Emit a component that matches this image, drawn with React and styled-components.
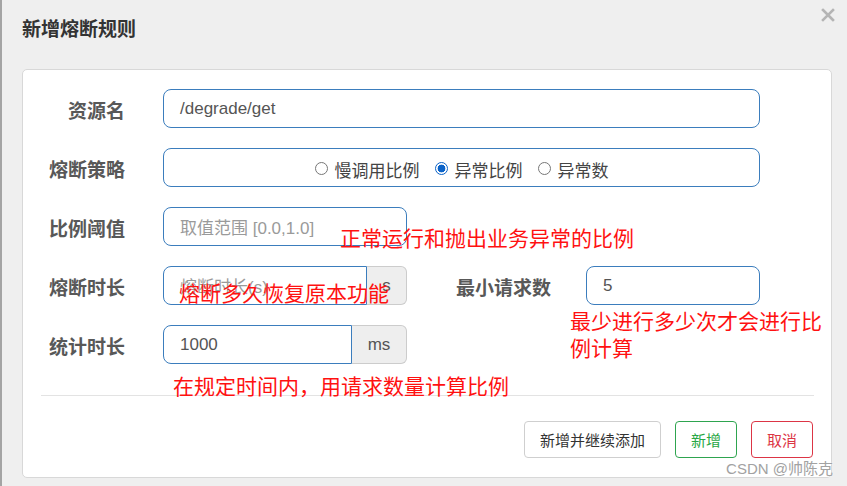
import React from "react";
import styled, { createGlobalStyle } from "styled-components";

const GlobalStyle = createGlobalStyle`
  html, body { margin: 0; padding: 0; background: #efefef; }
  body { font-family: "Liberation Sans", "Noto Sans CJK SC", sans-serif; }
  * { box-sizing: border-box; }
`;

const Page = styled.div`
  position: relative;
  width: 847px;
  height: 486px;
  background: #efefef;
  border-left: 2px solid #a4a4a4;
  padding: 0 15px 0 20px;
  overflow: hidden;
`;

const Header = styled.div`
  height: 69px;
  display: flex;
  justify-content: space-between;
  align-items: flex-start;
`;

const Title = styled.h4`
  margin: 15px 0 0;
  font-family: "Noto Sans CJK SC", sans-serif;
  font-size: 19px;
  line-height: 26px;
  font-weight: 700;
  color: #333;
`;

const Close = styled.button`
  margin: 8px -3px 0 0;
  padding: 0;
  border: 0;
  background: none;
  width: 14px;
  height: 14px;
  display: flex;
`;

const Card = styled.div`
  position: relative;
  width: 810px;
  height: 409px;
  background: #fff;
  border: 1px solid #d8d8d8;
  border-radius: 5px;
  padding-top: 19px;
`;

const Form = styled.div`
  display: flex;
  flex-direction: column;
  gap: 20px;
`;

const Row = styled.div`
  display: flex;
  align-items: center;
  height: 39px;
`;

const Label = styled.label`
  width: ${(p) => p.$w}px;
  margin-right: ${(p) => p.$gap}px;
  text-align: right;
  font-family: "Noto Sans CJK SC", sans-serif;
  font-size: 19px;
  font-weight: 700;
  color: #585858;
  line-height: 24px;
  padding-top: 2px;
`;

const Input = styled.div`
  width: ${(p) => p.$w}px;
  height: 39px;
  border: 1px solid #3b7dbd;
  border-radius: ${(p) => (p.$grouped ? "8px 0 0 8px" : "8px")};
  padding-left: 16px;
  display: flex;
  align-items: center;
  font-family: "Liberation Sans", "Noto Sans CJK SC", sans-serif;
  font-size: 17px;
  color: ${(p) => (p.$placeholder ? "#9a9a9a" : "#555")};
`;

const Group = styled.div`
  display: flex;
`;

const Addon = styled.div`
  width: ${(p) => p.$w}px;
  height: 39px;
  background: #eee;
  border: 1px solid #ccc;
  border-left: 0;
  border-radius: 0 6px 6px 0;
  display: flex;
  align-items: center;
  justify-content: center;
  font-size: 17px;
  color: #555;
`;

const RadioBox = styled.div`
  width: 597px;
  height: 39px;
  border: 1px solid #3b7dbd;
  border-radius: 8px;
  display: flex;
  align-items: center;
  justify-content: center;
  gap: 15px;
  padding-top: 3px;
`;

const Option = styled.span`
  display: flex;
  align-items: center;
  gap: 7px;
  font-family: "Noto Sans CJK SC", sans-serif;
  font-size: 17px;
  color: #444;
`;

const Dot = styled.span`
  width: 13px;
  height: 13px;
  border-radius: 50%;
  border: ${(p) => (p.$on ? "1.5px solid #0b63c8" : "1px solid #777")};
  background: ${(p) => (p.$on ? "radial-gradient(circle, #0b63c8 0 3.6px, #fff 4.2px)" : "#fff")};
  margin-top: -2px;
`;

const Divider = styled.div`
  height: 1px;
  background: #e3e3e3;
  margin: 31px 17px 0 18px;
`;

const Footer = styled.div`
  display: flex;
  justify-content: flex-end;
  gap: 14px;
  padding: 25px 18px 0 0;
`;

const Button = styled.button`
  height: 37px;
  padding: 0 ${(p) => p.$px || 15}px;
  background: #fff;
  border: 1px solid ${(p) => p.$border};
  border-radius: 4px;
  color: ${(p) => p.$color};
  font-family: "Noto Sans CJK SC", sans-serif;
  font-size: 15px;
`;

const Note = styled.div`
  position: absolute;
  left: ${(p) => p.$x}px;
  top: ${(p) => p.$y}px;
  width: ${(p) => (p.$w ? `${p.$w}px` : "auto")};
  white-space: ${(p) => (p.$w ? "normal" : "nowrap")};
  font-family: "Noto Sans CJK SC", sans-serif;
  font-size: 21px;
  line-height: ${(p) => p.$lh || 24}px;
  color: #ff1111;
`;

const Watermark = styled.div`
  position: absolute;
  right: 14px;
  top: 459px;
  font-family: "Liberation Sans", "Noto Sans CJK SC", sans-serif;
  font-size: 15px;
  line-height: 20px;
  color: #a2a2a2;
  text-shadow: 0 0 2px #fff;
`;

export default function App() {
  return (
    <>
      <GlobalStyle />
      <Page>
        <Header>
          <Title>新增熔断规则</Title>
          <Close aria-label="close">
            <svg width="14" height="14" viewBox="0 0 14 14">
              <path d="M2 2 L12 12 M12 2 L2 12" stroke="#b4b4b4" strokeWidth="2.6" strokeLinecap="square" />
            </svg>
          </Close>
        </Header>
        <Card>
          <Form>
            <Row>
              <Label $w={102} $gap={38}>资源名</Label>
              <Input $w={597}>/degrade/get</Input>
            </Row>
            <Row>
              <Label $w={102} $gap={38}>熔断策略</Label>
              <RadioBox>
                <Option><Dot />慢调用比例</Option>
                <Option><Dot $on />异常比例</Option>
                <Option><Dot />异常数</Option>
              </RadioBox>
            </Row>
            <Row>
              <Label $w={102} $gap={38}>比例阈值</Label>
              <Input $w={244} $placeholder>取值范围 [0.0,1.0]</Input>
            </Row>
            <Row>
              <Label $w={102} $gap={38}>熔断时长</Label>
              <Group>
                <Input $w={204} $grouped $placeholder>熔断时长(s)</Input>
                <Addon $w={40}>s</Addon>
              </Group>
              <Label $w={144} $gap={35}>最小请求数</Label>
              <Input $w={174}>5</Input>
            </Row>
            <Row>
              <Label $w={102} $gap={38}>统计时长</Label>
              <Group>
                <Input $w={189} $grouped>1000</Input>
                <Addon $w={55}>ms</Addon>
              </Group>
            </Row>
          </Form>
          <Divider />
          <Footer>
            <Button $border="#cfcfcf" $color="#333">新增并继续添加</Button>
            <Button $border="#2ea44f" $color="#28a745">新增</Button>
            <Button $border="#dc3545" $color="#dc3545">取消</Button>
          </Footer>
          <Note $x={317} $y={155}>正常运行和抛出业务异常的比例</Note>
          <Note $x={156} $y={210}>熔断多久恢复原本功能</Note>
          <Note $x={547} $y={237} $w={262} $lh={27}>最少进行多少次才会进行比例计算</Note>
          <Note $x={150} $y={303}>在规定时间内，用请求数量计算比例</Note>
        </Card>
        <Watermark>CSDN @帅陈克</Watermark>
      </Page>
    </>
  );
}
